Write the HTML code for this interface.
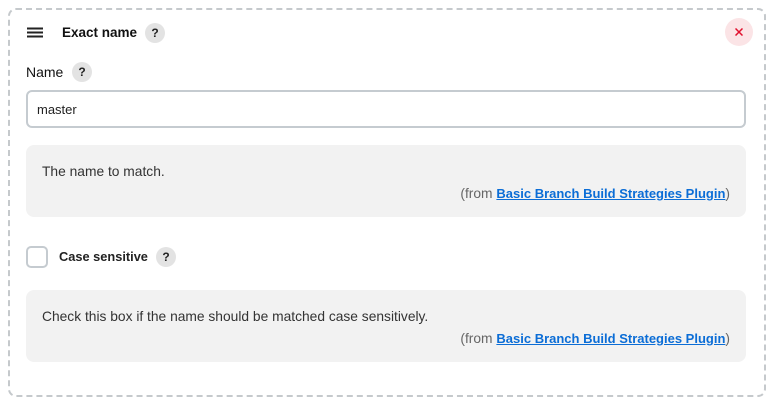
<!DOCTYPE html>
<html><head><style>
body{margin:0;width:777px;height:402px;background:#fff;font-family:"Liberation Sans",sans-serif;color:#333;position:relative;overflow:hidden}
.frame{position:absolute;left:8px;top:8px;width:754px;height:385px;border:2px dashed #c5c9cc;border-radius:8px}
.abs{position:absolute}
.q{position:absolute;width:20px;height:20px;border-radius:50%;background:#e3e3e3;font-size:12px;font-weight:bold;text-align:center;line-height:20px;color:#222}
.box{position:absolute;left:26px;width:720px;background:#f2f2f2;border-radius:8px;font-size:13.8px;color:#333}
a{color:#0b6dd6;font-weight:bold;text-decoration:underline;font-size:13px}
</style></head><body>
<div class="frame"></div>
<svg class="abs" style="left:27px;top:27px" width="16" height="12"><path d="M0 1.5h16M0 5.5h16M0 9.5h16" stroke="#222" stroke-width="2"/></svg>
<div class="abs" style="left:62px;top:25px;font-size:13.5px;font-weight:bold;color:#111">Exact name</div>
<div class="q" style="left:145px;top:23px">?</div>
<div class="abs" style="left:725px;top:18px;width:28px;height:28px;border-radius:50%;background:#fbe4e6"></div>
<svg class="abs" style="left:735px;top:28px" width="8" height="8"><path d="M0.5 0.5L7.5 7.5M7.5 0.5L0.5 7.5" stroke="#e0102d" stroke-width="1.5"/></svg>
<div class="abs" style="left:26px;top:64px;font-size:14px;color:#111">Name</div>
<div class="q" style="left:72px;top:62px">?</div>
<div class="abs" style="left:26px;top:90px;width:716px;height:34px;border:2px solid #c5cbd0;border-radius:6px"></div>
<div class="abs" style="left:37px;top:102px;font-size:13px;color:#222">master</div>
<div class="box" style="top:145px;height:72px"><div class="abs" style="left:16px;top:19px">The name to match.</div><div class="abs" style="right:16px;top:41px;color:#666">(from <a>Basic Branch Build Strategies Plugin</a>)</div></div>
<div class="abs" style="left:26px;top:246px;width:18px;height:18px;border:2px solid #c5cbd0;border-radius:5px"></div>
<div class="abs" style="left:59px;top:249px;font-size:12.8px;font-weight:bold;color:#222">Case sensitive</div>
<div class="q" style="left:156px;top:247px">?</div>
<div class="box" style="top:290px;height:72px"><div class="abs" style="left:16px;top:19px">Check this box if the name should be matched case sensitively.</div><div class="abs" style="right:16px;top:41px;color:#666">(from <a>Basic Branch Build Strategies Plugin</a>)</div></div>
</body></html>
